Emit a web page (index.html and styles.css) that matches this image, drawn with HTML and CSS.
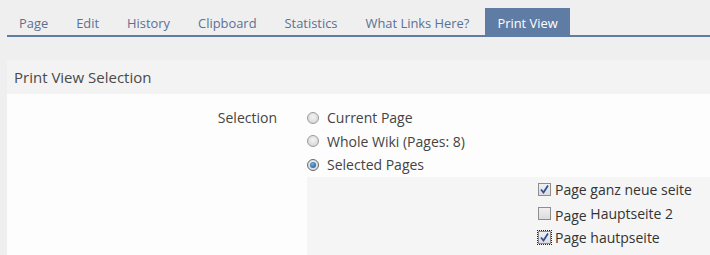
FILE: index.html
```html
<!DOCTYPE html>
<html lang="en">
<head>
    <meta charset="UTF-8">
    <title>Print View</title>
    <link rel="stylesheet" href="styles.css">
</head>
<body>

    <div class="tabs">
        <a class="tab">Page</a>
        <a class="tab">Edit</a>
        <a class="tab">History</a>
        <a class="tab">Clipboard</a>
        <a class="tab">Statistics</a>
        <a class="tab">What Links Here?</a>
        <a class="tab active">Print View</a>
    </div>

    <div class="panel">
        <div class="panel-head">Print View Selection</div>
        <div class="panel-body">
            <div class="row">
                <div class="label">Selection</div>
                <div class="options">
                    <div class="option"><span class="radio"></span>Current Page</div>
                    <div class="option"><span class="radio"></span>Whole Wiki (Pages: 8)</div>
                    <div class="option"><span class="radio checked"></span>Selected Pages</div>
                </div>
            </div>
            <div class="pages">
                <div class="page">
                    <span class="check"><svg viewBox="0 0 13 13" width="13" height="13"><path d="M3 6.5 L5.5 9.5 L10 2.5" fill="none" stroke="#2f4f9e" stroke-width="1.8"/></svg></span>Page ganz neue seite
                </div>
                <div class="page">
                    <span class="check"></span><span class="low">Page</span>&nbsp;Hauptseite 2
                </div>
                <div class="page">
                    <span class="check focus"><svg viewBox="0 0 13 13" width="13" height="13"><path d="M3 6.5 L5.5 9.5 L10 2.5" fill="none" stroke="#2f4f9e" stroke-width="1.8"/></svg></span>Page hautpseite
                </div>
                <div class="page">
                    <span class="check"></span>
                </div>
            </div>
        </div>
    </div>

</body>
</html>
```

FILE: styles.css
```css
* { margin: 0; padding: 0; box-sizing: border-box; }
body { background: #efefef; font-family: "Open Sans", "DejaVu Sans", sans-serif; color: #444; padding: 8px 0 0 7px; overflow: hidden; height: 255px; }

.tabs { display: flex; gap: 4px; border-bottom: 2px solid #5f7ca5; height: 29px; }
.tab { padding: 0 12px; height: 27px; line-height: 30px; font-size: 12.9px; color: #5b7194; }
.tab.active { background: #5f7ca5; color: #fff; }

.panel { margin-top: 23px; background: #fdfdfd; height: 200px; }
.panel-head { height: 34px; line-height: 34px; background: #f3f3f3; padding-left: 7px; font-size: 15px; color: #4a4a4a; }
.panel-body { padding-top: 12px; }

.row { display: flex; }
.label { width: 270px; text-align: right; font-size: 14px; line-height: 23.5px; }
.options { margin-left: 30px; }
.option { display: flex; align-items: center; height: 23.5px; font-size: 14px; }

.radio { width: 12px; height: 12px; border-radius: 50%; border: 1px solid #9a9a9a; background: radial-gradient(circle at 50% 40%, #f4f4f4, #cfcfcf); margin-right: 8px; position: relative; }
.radio.checked { border-color: #6a6a6a; }
.radio.checked::after { content: ""; position: absolute; left: 2px; top: 2px; width: 6px; height: 6px; border-radius: 50%; background: radial-gradient(circle at 40% 35%, #6fb2e8, #0b4e8c); }

.pages { margin-left: 300px; background: #f5f5f5; padding: 1px 0 0 231px; height: 90px; }
.page { display: flex; align-items: center; height: 24px; font-size: 14px; color: #333; }
.check { width: 13px; height: 13px; border: 1px solid #8e8e8e; background: linear-gradient(#f0f0f0, #dcdcdc); margin-right: 4px; display: inline-block; flex: none; }
.check svg { display: block; margin: -1px; }
.check.focus { outline: 1px dotted #222; outline-offset: 0; }
.low { position: relative; top: 2px; }
```
